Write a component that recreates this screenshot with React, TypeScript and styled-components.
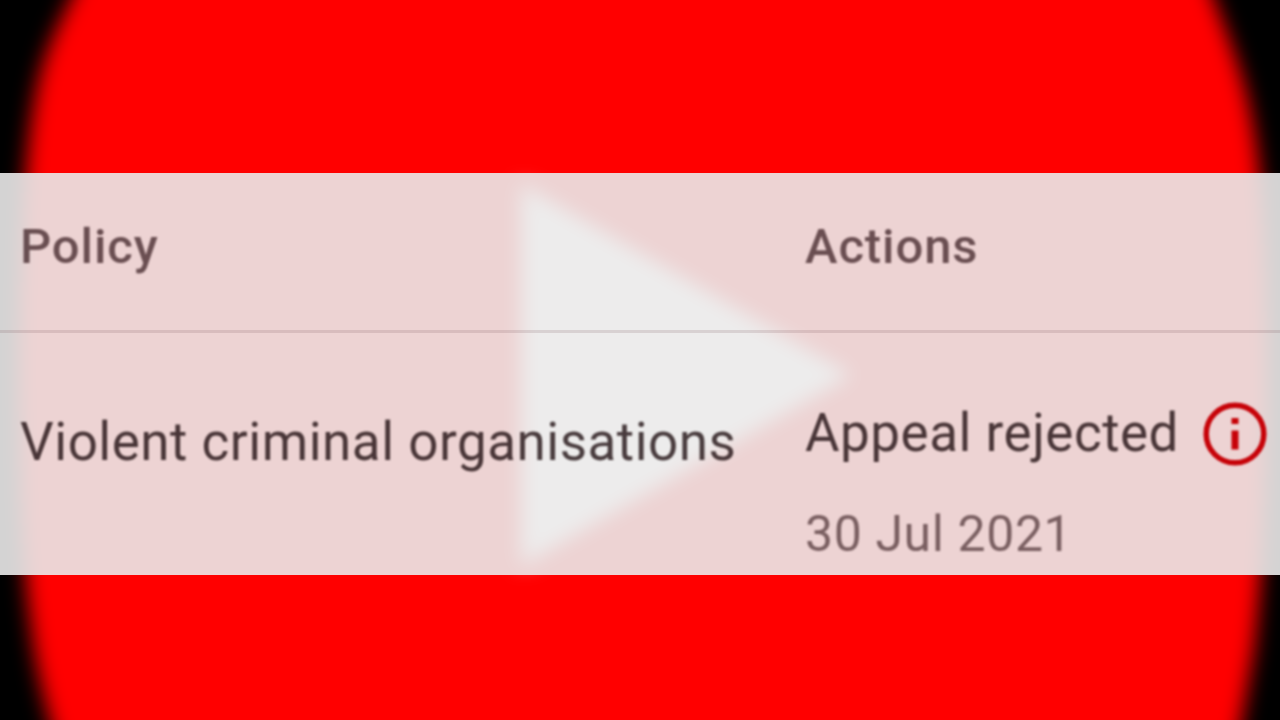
import styled, { createGlobalStyle } from 'styled-components';

const App: React.FC = () => {
  return (
    <Screen>
      <GlobalStyle />
      <Backdrop viewBox='0 0 1280 720' aria-hidden='true'>
        <defs>
          <filter id='soft' x='-10%' y='-10%' width='120%' height='120%'>
            <feGaussianBlur stdDeviation='10' />
          </filter>
        </defs>
        <path
          d='M88 -40 C74 0 48 34 37 88 C26 140 20 230 19 375 C20 480 22 560 31 625 C36 670 46 710 66 775 L1230 775 C1242 725 1247 690 1254 650 C1262 585 1267 490 1267 375 C1267 270 1264 180 1252 120 C1242 62 1220 20 1200 -40 Z'
          fill='#ff0000'
          filter='url(#soft)'
        />
        <path d='M521 184 L852 375 L521 566 Z' fill='#ffffff' filter='url(#soft)' />
      </Backdrop>

      <Table>
        <HeaderRow>
          <HeaderCell>Policy</HeaderCell>
          <HeaderCell>Actions</HeaderCell>
        </HeaderRow>
        <Row>
          <PolicyName>Violent criminal organisations</PolicyName>
          <ActionCell>
            <ActionLine>
              <Status>Appeal rejected</Status>
              <InfoIcon viewBox='0 0 64 64'>
                <circle cx='32' cy='32' r='28.8' fill='none' stroke='#c60208' strokeWidth='5.5' />
                <rect x='28.5' y='16' width='7' height='6' fill='#c60208' />
                <rect x='28.5' y='28.5' width='7' height='19' fill='#c60208' />
              </InfoIcon>
            </ActionLine>
            <ActionDate>30 Jul 2021</ActionDate>
          </ActionCell>
        </Row>
      </Table>
    </Screen>
  );
};

export default App;

const GlobalStyle = createGlobalStyle`
  body {
    margin: 0;
    background: #000000;
  }
`;

const Screen = styled.div`
  position: relative;
  box-sizing: border-box;
  width: 1280px;
  height: 720px;
  padding-top: 173px;
  overflow: hidden;
  background-color: #000000;
  font-family: Roboto, 'Liberation Sans', sans-serif;
`;

const Backdrop = styled.svg`
  position: absolute;
  inset: 0;
  width: 1280px;
  height: 720px;
`;

const Table = styled.section`
  position: relative;
  height: 402px;
  background-color: rgba(235, 234, 234, 0.9);
`;

const HeaderRow = styled.div`
  display: grid;
  grid-template-columns: 785px 1fr;
  box-sizing: border-box;
  height: 160px;
  padding: 44px 0 0 20px;
  border-bottom: 3px solid rgba(100, 60, 65, 0.15);
`;

const HeaderCell = styled.div`
  font-size: 49px;
  font-weight: 500;
  line-height: 60px;
  letter-spacing: 0.9px;
  color: rgba(50, 22, 26, 0.7);
  filter: blur(0.8px);
`;

const Row = styled.div`
  display: grid;
  grid-template-columns: 785px 1fr;
  padding: 69px 0 0 20px;
`;

const PolicyName = styled.div`
  padding-top: 9px;
  font-size: 53px;
  line-height: 62px;
  letter-spacing: 0.5px;
  white-space: nowrap;
  color: rgba(18, 0, 3, 0.75);
  filter: blur(0.8px);
`;

const ActionCell = styled.div`
  display: flex;
  flex-direction: column;
`;

const ActionLine = styled.div`
  display: flex;
  align-items: center;
  gap: 24px;
  height: 62px;
`;

const Status = styled.span`
  font-size: 53px;
  line-height: 62px;
  letter-spacing: 0.5px;
  white-space: nowrap;
  color: rgba(18, 0, 3, 0.75);
  filter: blur(0.8px);
`;

const InfoIcon = styled.svg`
  flex: none;
  width: 64px;
  height: 64px;
  margin-top: 2px;
  filter: blur(0.8px);
`;

const ActionDate = styled.div`
  margin-top: 40px;
  font-size: 50px;
  line-height: 60px;
  letter-spacing: 0.6px;
  color: rgba(50, 22, 26, 0.62);
  filter: blur(0.8px);
`;
